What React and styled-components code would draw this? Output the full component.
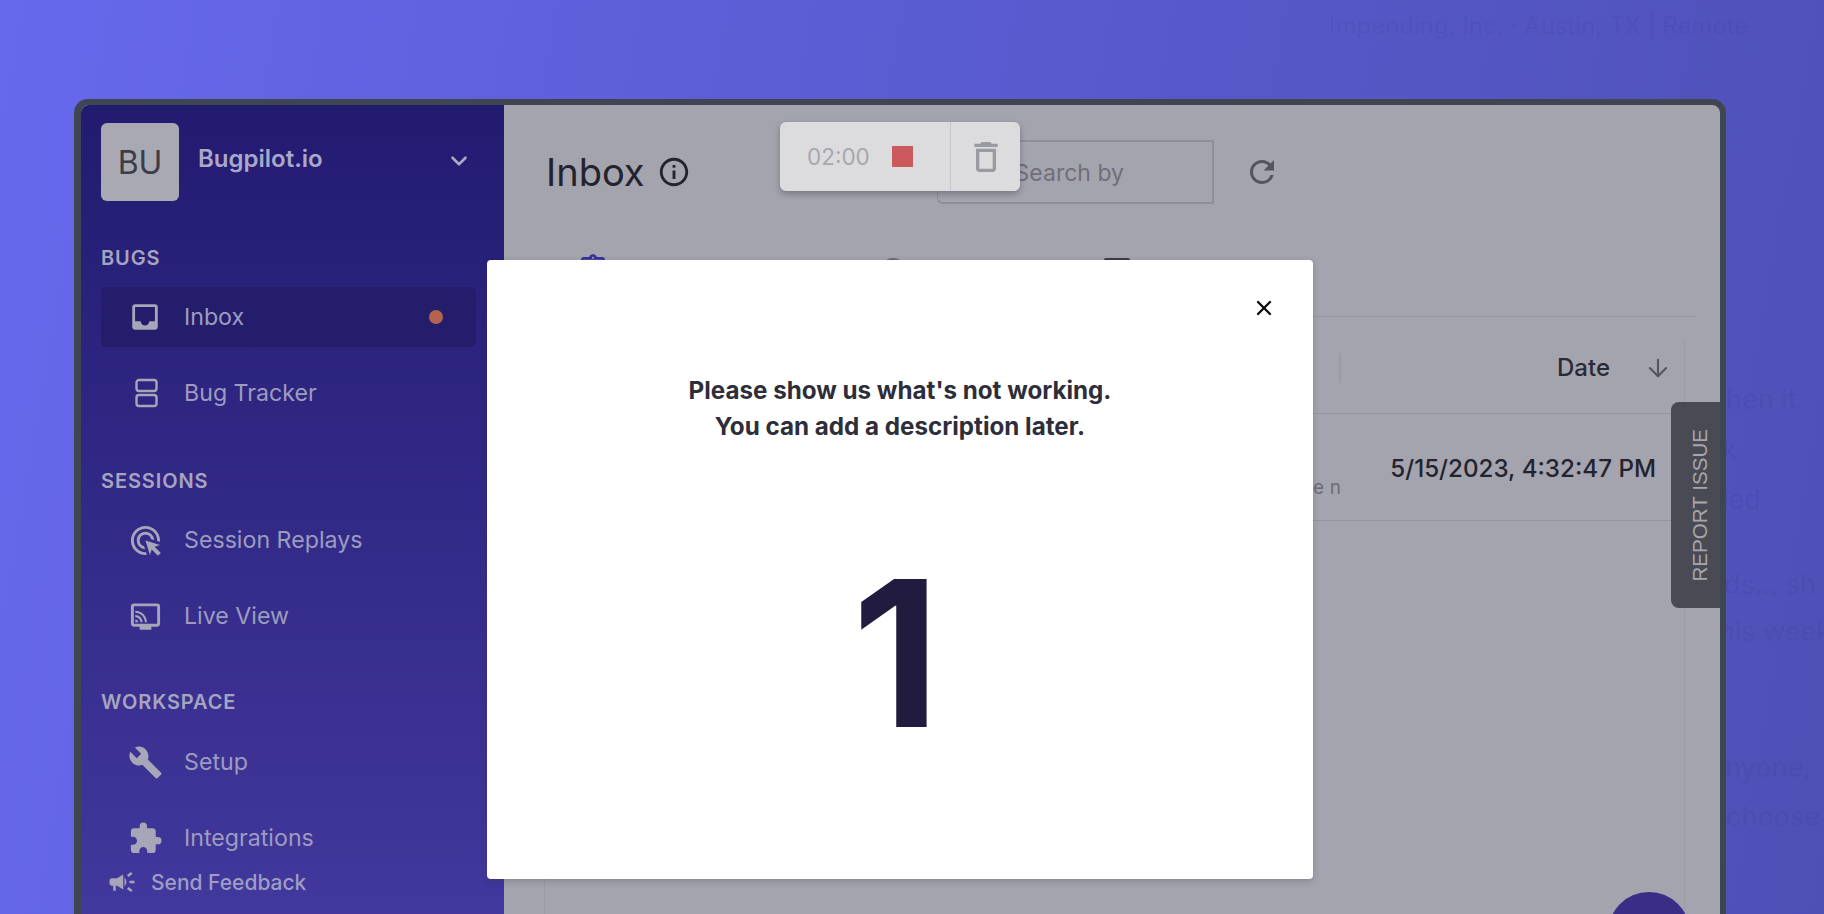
import styled, { createGlobalStyle } from "styled-components";
import { ArrowDown, ChevronDown, X } from "lucide-react";
import {
  MdAdsClick,
  MdBuild,
  MdCampaign,
  MdExtension,
  MdInbox,
  MdInfoOutline,
  MdOutlineAssignment,
  MdOutlineConnectedTv,
  MdOutlineDelete,
  MdRefresh,
} from "react-icons/md";

const Global = createGlobalStyle`
  html, body { margin: 0; padding: 0; height: 100%; overflow: hidden; }
  body { font-family: Inter, "Liberation Sans", sans-serif; }
  * { box-sizing: border-box; }
`;

const Page = styled.div`
  width: 1824px;
  height: 914px;
  overflow: hidden;
  display: flex;
  flex-direction: column;
  background: linear-gradient(100deg, #6669ec 0%, #5a5cd2 45%, #4f50b6 100%);
`;

const TopLine = styled.div`
  height: 99px;
  flex: none;
  padding: 12px 0 0 1329px;
  font-size: 24px;
  line-height: 27px;
  white-space: nowrap;
  color: rgba(62, 56, 160, 0.16);
`;

const Body = styled.div`
  flex: 1;
  min-height: 0;
  display: flex;
  padding-left: 74px;
`;

const Window = styled.div`
  position: relative;
  flex: none;
  width: 1652px;
  height: 900px;
  display: flex;
  border: solid #3f4652;
  border-width: 6px 6px 0 7px;
  border-radius: 14px 14px 0 0;
  background: #a4a4ae;
`;

const SideText = styled.div`
  flex: 1;
  min-width: 0;
  overflow: hidden;
  font-size: 27px;
  line-height: 32px;
  white-space: nowrap;
  color: rgba(62, 56, 150, 0.2);
`;

const SideLine = styled.div`
  margin-top: ${(p) => p.$gap}px;
  margin-left: -${(p) => p.$shift}px;
`;

const Sidebar = styled.aside`
  flex: none;
  width: 423px;
  padding: 18px 26px 0 20px;
  border-radius: 8px 0 0 0;
  display: flex;
  flex-direction: column;
  background: linear-gradient(180deg, #221b70 0%, #453ba2 100%);
`;

const Workspace = styled.div`
  display: flex;
  align-items: flex-start;
  height: 78px;
  margin-bottom: 45px;
`;

const Avatar = styled.div`
  flex: none;
  width: 78px;
  height: 78px;
  border-radius: 6px;
  background: #a9a9b3;
  color: #3c3d47;
  font-size: 32px;
  display: flex;
  align-items: center;
  justify-content: center;
`;

const Brand = styled.div`
  flex: 1;
  margin: 21px 0 0 19px;
  font-size: 24px;
  line-height: 30px;
  font-weight: 600;
  color: #a9a8c8;
`;

const Caret = styled.span`
  margin: 25px 6px 0 0;
  color: #aaa9c4;
  display: flex;
`;

const SectionLabel = styled.div`
  font-size: 20px;
  line-height: 24px;
  font-weight: 600;
  letter-spacing: 0.9px;
  color: #a6a5bf;
  margin-top: ${(p) => p.$top}px;
  margin-bottom: ${(p) => p.$bottom}px;
`;

const NavRow = styled.div`
  height: 60px;
  flex: none;
  margin-bottom: 16px;
  margin-right: 2px;
  padding: 0 36px 0 30px;
  border-radius: 6px;
  display: flex;
  align-items: center;
  font-size: 23.2px;
  color: #9d9cbf;
  background: ${(p) => (p.$active ? "#241d6b" : "transparent")};
`;

const NavIcon = styled.span`
  width: 53px;
  flex: none;
  display: flex;
  color: #a7a6b9;
  svg { margin-left: -3px; }
`;

const NavText = styled.span`
  flex: 1;
`;

const Dot = styled.span`
  width: 14px;
  height: 14px;
  border-radius: 50%;
  background: #b5624f;
  margin-right: -3px;
`;

const Feedback = styled.div`
  margin: -16px 0 0 6px;
  display: flex;
  align-items: center;
  gap: 14px;
  height: 28px;
  font-size: 21px;
  font-weight: 500;
  color: #9e9dc2;
  svg { color: #a7a6b9; }
`;

const Main = styled.main`
  flex: 1;
  min-width: 0;
  display: flex;
  flex-direction: column;
  padding: 0 35px 0 40px;
`;

const Head = styled.div`
  height: 134px;
  flex: none;
  padding: 35px 0 0 2px;
  display: flex;
  align-items: flex-start;
`;

const Title = styled.h1`
  margin: 0;
  font-size: 38px;
  line-height: 64px;
  font-weight: 400;
  color: #23232e;
`;

const InfoIcon = styled.span`
  display: flex;
  margin: 15px 0 0 12px;
  color: #23232e;
`;

const SearchBox = styled.div`
  width: 277px;
  height: 64px;
  margin-left: 246px;
  padding: 16px 0 0 77px;
  border: 2px solid #8f8f9a;
  border-left-width: 1px;
  border-radius: 6px 0 0 6px;
  font-size: 23px;
  line-height: 30px;
  color: #6f6f7a;
`;

const Refresh = styled.span`
  display: flex;
  margin: 14px 0 0 30px;
  color: #55555f;
`;

const Tabs = styled.div`
  height: 78px;
  flex: none;
  margin-right: -10px;
  padding: 14px 0 0 33px;
  display: flex;
  border-bottom: 1px solid #95959f;
  color: #3a2f9b;
`;

const TabMark = styled.span`
  display: block;
  flex: none;
  width: 26px;
  height: 26px;
  margin-left: ${(p) => p.$left}px;
  margin-top: 5px;
  border: 3px solid ${(p) => p.$color};
  border-radius: ${(p) => p.$radius};
`;

const TableWrap = styled.section`
  flex: 1;
  margin-top: 23px;
  display: flex;
  flex-direction: column;
  border-left: 1px solid #9b9ba5;
  border-right: 1px solid #9b9ba5;
`;

const HeadRow = styled.div`
  height: 74px;
  flex: none;
  padding: 0 12px 18px 794px;
  display: flex;
  align-items: center;
  gap: 34px;
  border-bottom: 1px solid #95959f;
  font-size: 24px;
  font-weight: 500;
  color: #2a2a36;
  svg { color: #55555f; }
`;

const HeadSplit = styled.span`
  width: 2px;
  height: 30px;
  margin-right: auto;
  background: #9a9aa4;
`;

const DataRow = styled.div`
  height: 107px;
  flex: none;
  padding: 2px 28px 0 768px;
  display: flex;
  align-items: center;
  justify-content: space-between;
  border-bottom: 1px solid #95959f;
`;

const Preview = styled.span`
  margin-top: 38px;
  font-size: 19px;
  letter-spacing: 0.2px;
  color: #6d6d78;
`;

const DateCell = styled.span`
  font-size: 24.2px;
  font-weight: 500;
  color: #23232e;
`;

const Timer = styled.div`
  position: absolute;
  left: 699px;
  top: 17px;
  width: 240px;
  height: 69px;
  display: flex;
  align-items: center;
  background: #dcdcdf;
  border-radius: 6px;
  box-shadow: 0 3px 6px rgba(40, 40, 60, 0.35);
`;

const TimerClock = styled.div`
  width: 171px;
  height: 100%;
  padding-left: 27px;
  display: flex;
  align-items: center;
  gap: 22px;
  border-right: 1px solid #c6c6cc;
  font-size: 22.5px;
  color: #a7a7ad;
`;

const StopSquare = styled.span`
  width: 21px;
  height: 21px;
  background: #cc5a5c;
`;

const TrashButton = styled.span`
  flex: 1;
  display: flex;
  justify-content: center;
  color: #9a9aa2;
`;

const Modal = styled.div`
  position: absolute;
  left: 406px;
  top: 155px;
  width: 826px;
  height: 619px;
  padding-top: 113px;
  background: #fff;
  border-radius: 4px;
  box-shadow: 0 2px 6px rgba(40, 40, 60, 0.25);
  display: flex;
  flex-direction: column;
  align-items: center;
`;

const Close = styled.span`
  position: absolute;
  right: 37px;
  top: 36px;
  display: flex;
  color: #111;
`;

const Prompt = styled.p`
  margin: 0;
  font-size: 24.2px;
  line-height: 36px;
  font-weight: 700;
  text-align: center;
  color: #2e2e3a;
`;

const Count = styled.div`
  margin: 88px 8px 0 0;
  font-size: 204px;
  line-height: 240px;
  font-weight: 700;
  color: #211c3f;
`;

const ReportTab = styled.div`
  position: absolute;
  right: 0;
  top: 297px;
  width: 49px;
  height: 206px;
  padding-left: 9px;
  border-radius: 8px 0 0 8px;
  background: #4a4a54;
  display: flex;
  align-items: center;
  justify-content: center;
`;

const ReportText = styled.span`
  writing-mode: vertical-rl;
  transform: rotate(180deg);
  font-family: "Liberation Sans", sans-serif;
  font-size: 20.6px;
  white-space: nowrap;
  color: #a6a6ae;
`;

const ChatBubble = styled.div`
  position: absolute;
  left: 1527px;
  top: 787px;
  width: 82px;
  height: 82px;
  border-radius: 50%;
  background: #392d86;
`;

const BugTrackerIcon = () => (
  <svg width="32" height="30" viewBox="0 0 32 30" fill="none" stroke="currentColor" strokeWidth="2.4">
    <rect x="8.5" y="2" width="20" height="11" rx="2.5" />
    <rect x="8.5" y="17" width="20" height="11" rx="2.5" />
  </svg>
);

const App = () => (
  <Page>
    <Global />
    <TopLine>Impending, Inc. · Austin, TX | Remote</TopLine>
    <Body>
      <Window>
        <Sidebar>
          <Workspace>
            <Avatar>BU</Avatar>
            <Brand>Bugpilot.io</Brand>
            <Caret>
              <ChevronDown size={26} strokeWidth={2.4} />
            </Caret>
          </Workspace>

          <SectionLabel $top={0} $bottom={17}>BUGS</SectionLabel>
          <NavRow $active>
            <NavIcon><MdInbox size={34} /></NavIcon>
            <NavText>Inbox</NavText>
            <Dot />
          </NavRow>
          <NavRow>
            <NavIcon><BugTrackerIcon /></NavIcon>
            <NavText>Bug Tracker</NavText>
          </NavRow>

          <SectionLabel $top={30} $bottom={17}>SESSIONS</SectionLabel>
          <NavRow>
            <NavIcon><MdAdsClick size={35} /></NavIcon>
            <NavText>Session Replays</NavText>
          </NavRow>
          <NavRow>
            <NavIcon><MdOutlineConnectedTv size={35} /></NavIcon>
            <NavText>Live View</NavText>
          </NavRow>

          <SectionLabel $top={28} $bottom={18}>WORKSPACE</SectionLabel>
          <NavRow>
            <NavIcon><MdBuild size={35} /></NavIcon>
            <NavText>Setup</NavText>
          </NavRow>
          <NavRow>
            <NavIcon><MdExtension size={35} /></NavIcon>
            <NavText>Integrations</NavText>
          </NavRow>

          <Feedback>
            <MdCampaign size={30} />
            <span>Send Feedback</span>
          </Feedback>
        </Sidebar>

        <Main>
          <Head>
            <Title>Inbox</Title>
            <InfoIcon><MdInfoOutline size={34} /></InfoIcon>
            <SearchBox>Search by</SearchBox>
            <Refresh><MdRefresh size={36} /></Refresh>
          </Head>
          <Tabs>
            <MdOutlineAssignment size={32} />
            <TabMark $left={271} $color="#6a6a75" $radius="50%" />
            <TabMark $left={198} $color="#3c3c46" $radius="2px" />
          </Tabs>
          <TableWrap>
            <HeadRow>
              <HeadSplit />
              <span>Date</span>
              <ArrowDown size={28} strokeWidth={1.8} />
            </HeadRow>
            <DataRow>
              <Preview>e n</Preview>
              <DateCell>5/15/2023, 4:32:47 PM</DateCell>
            </DataRow>
          </TableWrap>
        </Main>

        <Timer>
          <TimerClock>
            <span>02:00</span>
            <StopSquare />
          </TimerClock>
          <TrashButton><MdOutlineDelete size={40} /></TrashButton>
        </Timer>

        <Modal>
          <Close><X size={24} strokeWidth={2.4} /></Close>
          <Prompt>
            Please show us what's not working.
            <br />
            You can add a description later.
          </Prompt>
          <Count>1</Count>
        </Modal>

        <ReportTab>
          <ReportText>REPORT ISSUE</ReportText>
        </ReportTab>
        <ChatBubble />
      </Window>
      <SideText>
        <SideLine $gap={285} $shift={22}>when it</SideLine>
        <SideLine $gap={18} $shift={4}>k</SideLine>
        <SideLine $gap={18} $shift={4}>ied</SideLine>
        <SideLine $gap={53} $shift={2}>ds... sh</SideLine>
        <SideLine $gap={15} $shift={16}>this week</SideLine>
        <SideLine $gap={104} $shift={16}>anyone,</SideLine>
        <SideLine $gap={17} $shift={0}>choose</SideLine>
      </SideText>
    </Body>
  </Page>
);

export default App;
